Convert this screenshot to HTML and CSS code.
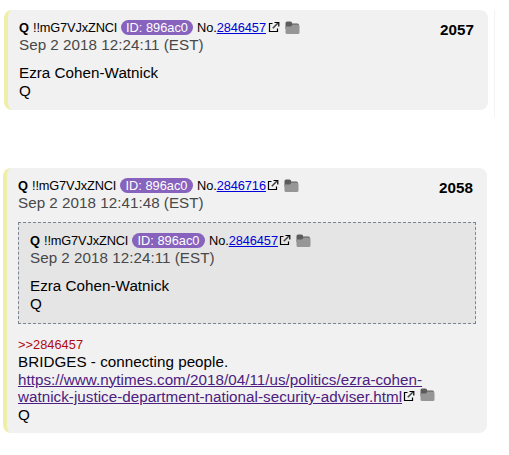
FILE: index.html
```html
<!DOCTYPE html>
<html>
<head>
    <meta charset="utf-8">
    <title>Posts</title>
    <link rel="stylesheet" href="styles.css">
</head>
<body>

    <!-- shared icons -->
    <svg class="sprite">
        <symbol id="external" viewBox="0 0 12 12">
            <path d="M4.5 2.5H1.5V10.5H9.5V7.5" fill="none" stroke="#000" stroke-width="1.2" />
            <path d="M4.8 7.2L10 2" fill="none" stroke="#444" stroke-width="1.6" />
            <path d="M6.5 1.5H10.8V5.5" fill="none" stroke="#000" stroke-width="1.2" />
        </symbol>
        <symbol id="folder" viewBox="0 0 15 14">
            <path d="M0.5 2Q0.5 0.5 2 0.5H5.5Q7 0.5 7.2 2.5H12.5Q14 2.5 14 4V8H0.5Z" fill="#5c5c5c" />
            <path d="M0.5 5.5H6L7.5 3.5H13Q14.5 3.5 14.5 5V11.5Q14.5 13 13 13H2Q0.5 13 0.5 11.5Z" fill="#969696" />
        </symbol>
    </svg>

    <div class="posts">
        <div class="post first">
            <div class="count">2057</div>
            <div class="head">
                <b class="name">Q</b><span class="trip">!!mG7VJxZNCI</span><span class="id">ID: 896ac0</span><span class="no">No.<a href="#2846457">2846457</a></span><svg class="external gap"><use href="#external" /></svg><svg class="folder"><use href="#folder" /></svg>
            </div>
            <div class="date">Sep 2 2018 12:24:11 (EST)</div>
            <div class="text">Ezra Cohen-Watnick<br>Q</div>
        </div>

        <div class="post second">
            <div class="count">2058</div>
            <div class="head">
                <b class="name">Q</b><span class="trip">!!mG7VJxZNCI</span><span class="id">ID: 896ac0</span><span class="no">No.<a href="#2846716">2846716</a></span><svg class="external"><use href="#external" /></svg><svg class="folder"><use href="#folder" /></svg>
            </div>
            <div class="date">Sep 2 2018 12:41:48 (EST)</div>
            <div class="quote">
                <div class="head">
                    <b class="name">Q</b><span class="trip">!!mG7VJxZNCI</span><span class="id">ID: 896ac0</span><span class="no">No.<a href="#2846457">2846457</a></span><svg class="external"><use href="#external" /></svg><svg class="folder"><use href="#folder" /></svg>
                </div>
                <div class="date">Sep 2 2018 12:24:11 (EST)</div>
                <div class="text">Ezra Cohen-Watnick<br>Q</div>
            </div>
            <div class="reply">
                <div class="ref">&gt;&gt;2846457</div>
                BRIDGES - connecting people.<br>
                <a class="visited" href="https://www.nytimes.com/2018/04/11/us/politics/ezra-cohen-watnick-justice-department-national-security-adviser.html">https://www.nytimes.com/2018/04/11/us/politics/ezra-cohen-<br>watnick-justice-department-national-security-adviser.html</a><svg class="external"><use href="#external" /></svg><svg class="folder"><use href="#folder" /></svg><br>
                Q
            </div>
        </div>
    </div>

</body>
</html>
```

FILE: styles.css
```css
body {
    margin: 0;
    background: #fff;
    color: #000;
    font: 15.2px/18px "Liberation Sans", Arial, sans-serif;
    letter-spacing: 0.03px;
}
.sprite {
    display: none;
}
.posts {
    width: 495px;
    padding-top: 10px;
    background: linear-gradient(#f3f3f3, #f3f3f3) no-repeat 494px 10px / 1px 107px;
}
.post {
    box-sizing: border-box;
    width: 484px;
    padding: 8px 11px 10px;
    border-left: 4px solid #f0efa8;
    border-radius: 8px;
    background: #f1f1f1;
}
.first {
    height: 100px;
    margin-left: 4px;
}
.second {
    height: 265px;
    margin: 58px 0 0 3px;
}
.count {
    float: right;
    margin: 3px 3px 0 0;
    font-weight: bold;
}
.head {
    display: flex;
    align-items: center;
    height: 18px;
    font-size: 12.8px;
    letter-spacing: -0.15px;
    white-space: nowrap;
}
.name, .trip, .no {
    padding-top: 2px;
}
.name {
    width: 14px;
}
.trip {
    width: 88px;
}
.id {
    box-sizing: border-box;
    width: 73px;
    height: 15px;
    margin-right: 4px;
    border-radius: 8px;
    background: #8763bd;
    color: #fff;
    line-height: 16px;
    text-align: center;
    letter-spacing: 0;
}
.no {
    width: 69px;
    letter-spacing: -0.08px;
}
.first .id {
    width: 72px;
}
.external {
    width: 12px;
    height: 12px;
    margin-left: 1px;
}
.gap {
    margin-left: 2px;
}
.folder {
    width: 15px;
    height: 14px;
    margin-left: 5px;
}
.head .folder {
    margin-top: 2px;
}
a {
    color: #0000d8;
}
.visited {
    color: #4b2080;
}
.date {
    color: #484848;
}
.text {
    margin-top: 10px;
}
.quote {
    box-sizing: border-box;
    width: 458px;
    height: 102px;
    margin: 10px 0 12px;
    padding: 8px 11px;
    border: 1px dashed #7c8490;
    background: #e5e5e5;
}
.reply {
    line-height: 17.5px;
}
.ref {
    color: #af0a0f;
    font-size: 12.8px;
    height: 17px;
}
```
